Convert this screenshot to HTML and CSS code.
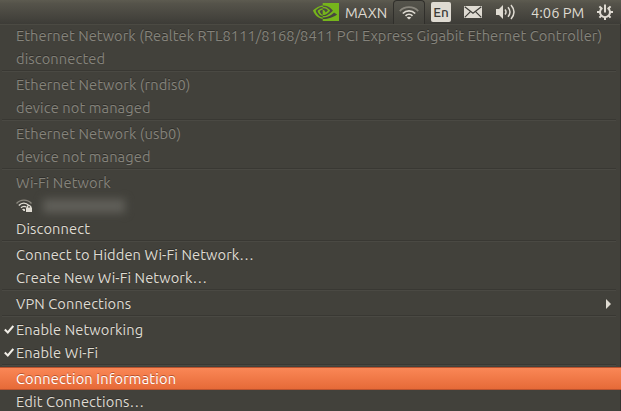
FILE: index.html
```html
<!DOCTYPE html>
<html lang="en">
<head>
<meta charset="utf-8">
<title>Network menu</title>
<link rel="stylesheet" href="styles.css">
</head>
<body>
<header class="panel">
  <svg class="eye" width="26" height="18" viewBox="0 4.063 24 15.874" preserveAspectRatio="none">
    <path fill="#76b51b" d="M8.948 8.798v-1.430a6.700 6.700 0 0 1 .424-.018c3.922-.124 6.493 3.374 6.493 3.374s-2.774 3.851-5.750 3.851c-.398 0-.787-.062-1.158-.185v-4.346c1.528.185 1.837.857 2.747 2.385l2.040-1.714s-1.492-1.952-4-1.952a6.016 6.016 0 0 0-.796.035m0-4.735v2.138l.424-.027c5.450-.185 9.010 4.470 9.010 4.470s-4.080 4.964-8.330 4.964c-.370 0-.733-.035-1.095-.097v1.325c.300.035.610.062.910.062 3.957 0 6.820-2.023 9.593-4.408.459.371 2.340 1.263 2.730 1.652-2.633 2.208-8.772 3.984-12.253 3.984-.335 0-.653-.018-.971-.053v1.864H24V4.063zm0 10.326v1.131c-3.657-.654-4.673-4.460-4.673-4.460s1.758-1.944 4.673-2.262v1.237H8.940c-1.528-.186-2.730 1.245-2.730 1.245s.680 2.412 2.739 3.110M2.456 10.900s2.164-3.197 6.500-3.533V6.201C4.153 6.590 0 10.653 0 10.653s2.350 6.802 8.948 7.420v-1.237c-4.840-.600-6.492-5.936-6.492-5.936z"/>
  </svg>
  <span class="mode">MAXN</span>
  <div class="tab">
    <svg width="20" height="14" viewBox="0 0 20 14" fill="none" stroke="#dfdbd2" stroke-width="1.700">
      <path stroke="#89867d" d="M.8 5.100C5.500-.1 14.500-.1 19.200 5.100"/>
      <path d="M3.800 7.500c3.500-3.600 8.900-3.600 12.400 0M6.500 9.800c2-2 5-2 7 0"/>
      <path fill="#dfdbd2" stroke="none" d="M10 13.500 7.700 11.500q2.300-1.500 4.600 0z"/>
    </svg>
  </div>
  <span class="lang">En</span>
  <svg class="mail" width="18" height="12" viewBox="0 0 18 12">
    <path fill="#dfdbd2" d="M0 0h18v12H0z"/>
    <path fill="none" stroke="#3e3d38" stroke-width="1.200" d="m.7.8 8.300 6.400L17.300.8M.7 11.400l5.500-5.600M17.300 11.400l-5.500-5.600"/>
  </svg>
  <svg class="sound" width="20" height="16" viewBox="0 0 20 16">
    <path fill="#dfdbd2" d="M0 5h3l4-4v14l-4-4H0z"/>
    <path fill="none" stroke="#dfdbd2" stroke-width="1.500" d="M9 5.500q2 2.500 0 5M12 3.200q4 4.800 0 9.600M15 1q6 7 0 14"/>
  </svg>
  <span class="clock">4:06 PM</span>
  <svg class="gear" width="16" height="16" viewBox="0 0 16 16" fill="none" stroke="#dfdbd2" stroke-width="2">
    <path d="M5.400 3.900a5 5 0 1 0 5.200 0"/>
    <path d="M8 .5v8M0 8h3M13 8h3M8 13v3M2.400 2.400l1.900 1.900M13.600 2.400l-1.900 1.900M2.400 13.600l1.900-1.900M13.600 13.600l-1.900-1.900"/>
  </svg>
</header>
<main class="menu">
  <section>
    <div class="row off tight">Ethernet Network (Realtek RTL8111/8168/8411 PCI Express Gigabit Ethernet Controller)</div>
    <div class="row off">disconnected</div>
  </section>
  <section>
    <div class="row off">Ethernet Network (rndis0)</div>
    <div class="row off">device not managed</div>
  </section>
  <section>
    <div class="row off">Ethernet Network (usb0)</div>
    <div class="row off">device not managed</div>
  </section>
  <section>
    <div class="row off">Wi-Fi Network</div>
    <div class="row">
      <svg width="17" height="14" viewBox="0 0 17 14" fill="none" stroke="#dfdbd2" stroke-width="1.400">
        <path stroke="#89867d" d="M.5 4.500c4-4.500 11-4.500 15 0"/>
        <path d="M2.800 6.500c3-3.200 7-3.200 10 0M5 8.700q2.500-2.200 5-.8"/>
        <path fill="#dfdbd2" stroke="none" d="M6 10.300q1.500-1 3 0V12H7.700zM10 8.500h6V13h-6z"/>
        <path d="M11.300 9V7.600q1.700-2.500 3.400 0V9"/>
      </svg>
      <span class="hidden-name"></span>
    </div>
    <div class="row">Disconnect</div>
  </section>
  <section>
    <div class="row">Connect to Hidden Wi-Fi Network…</div>
    <div class="row">Create New Wi-Fi Network…</div>
  </section>
  <section>
    <div class="row">VPN Connections<i class="arrow"></i></div>
  </section>
  <section>
    <div class="row checked"><svg class="check" width="10" height="9" viewBox="0 0 10 9"><path d="m.8 4.500 3 3L9.300 1"/></svg>Enable Networking</div>
    <div class="row checked"><svg class="check" width="10" height="9" viewBox="0 0 10 9"><path d="m.8 4.500 3 3L9.300 1"/></svg>Enable Wi-Fi</div>
  </section>
  <section>
    <div class="row selected">Connection Information</div>
    <div class="row wide">Edit Connections…</div>
  </section>
</main>
</body>
</html>
```
FILE: styles.css
```css
* { box-sizing: border-box; }
body {
  margin: 0;
  width: 621px;
  height: 411px;
  overflow: hidden;
  background: #42413b;
  color: #dfdbd2;
  font: 14.667px/23px Ubuntu, "Noto Sans", sans-serif;
}
.panel {
  display: flex;
  align-items: center;
  justify-content: flex-end;
  height: 24px;
  padding-right: 8px;
  background: linear-gradient(#5d5b50, #55534a 15%, #3d3c37);
}
.panel svg { display: block; flex: none; }
.mode { width: 43px; margin: 0 5px 0 6px; }
.tab {
  display: flex;
  align-items: center;
  justify-content: center;
  align-self: flex-end;
  width: 32px;
  height: 24px;
  border: 1px solid #302f2b;
  border-bottom: 0;
  border-radius: 4px 4px 0 0;
  background: linear-gradient(#55544c, #42413b);
}
.lang {
  width: 20px;
  height: 20px;
  margin: 0 13px 0 6px;
  border-radius: 2px;
  background: #dfdbd2;
  color: #3c3b37;
  font-size: 13.5px;
  font-weight: 500;
  line-height: 21px;
  text-align: center;
}
.mail { margin-right: 14px; }
.sound { margin-right: 15px; }
.clock { width: 53px; margin-right: 13px; white-space: nowrap; }
.menu {
  height: 387px;
  border-right: 1px solid #353430;
  box-shadow: inset 0 1px #4b4a43;
}
section + section::before {
  content: "";
  display: block;
  height: 2px;
  margin: 0 4px 0 2px;
  border-top: 1px solid #393833;
  box-shadow: inset 0 1px #4a4943;
}
.row {
  display: flex;
  align-items: center;
  height: 23px;
  padding-left: 16px;
  white-space: nowrap;
  letter-spacing: .1px;
  text-shadow: 0 -1px #302f2b;
}
.row.off { color: #85837b; }
.row.tight { letter-spacing: .065px; }
.row.wide { letter-spacing: .14px; }
.row.checked { padding-left: 4px; }
.check { margin-right: 2px; fill: none; stroke: #f0ede6; stroke-width: 2; }
.arrow {
  margin: 0 9px 0 auto;
  border: 5px solid transparent;
  border-left-color: #dfdbd2;
  border-right: 0;
}
.row.selected {
  margin-right: -1px;
  border: solid #b9532f;
  border-width: 1px 0;
  background: linear-gradient(#fa8756, #e66a38);
  color: #fff;
  letter-spacing: .14px;
  text-shadow: 0 -1px #b9532f;
}
.hidden-name {
  width: 82px;
  height: 14px;
  margin-left: 10px;
  background: #605f59;
  filter: blur(4px);
}
```
